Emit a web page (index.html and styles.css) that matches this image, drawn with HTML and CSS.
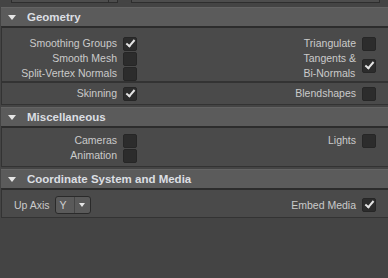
FILE: index.html
```html
<!DOCTYPE html>
<html lang="en">
<head>
    <meta charset="UTF-8">
    <title>FBX Export Options</title>
    <link rel="stylesheet" href="styles.css">
</head>
<body>
    <!-- bottom edge of the fields above, scrolled out of view -->
    <div class="top-fields">
        <div class="field field-short"><span class="field-split"></span></div>
        <div class="field field-long"></div>
    </div>

    <!-- Geometry -->
    <div class="section-header first"><span class="arrow"></span>Geometry</div>
    <div class="group group-geometry">
        <div class="col col-left">
            <div class="opt"><span class="label">Smoothing Groups</span><span class="check on"></span></div>
            <div class="opt"><span class="label">Smooth Mesh</span><span class="check"></span></div>
            <div class="opt"><span class="label">Split-Vertex Normals</span><span class="check"></span></div>
        </div>
        <div class="col col-right">
            <div class="opt"><span class="label">Triangulate</span><span class="check"></span></div>
            <div class="opt opt-tall"><span class="label">Tangents &amp;<br>Bi-Normals</span><span class="check on"></span></div>
        </div>
    </div>
    <div class="group group-single">
        <div class="col col-left">
            <div class="opt"><span class="label">Skinning</span><span class="check on"></span></div>
        </div>
        <div class="col col-right">
            <div class="opt"><span class="label">Blendshapes</span><span class="check"></span></div>
        </div>
    </div>

    <!-- Miscellaneous -->
    <div class="section-header"><span class="arrow"></span>Miscellaneous</div>
    <div class="group group-misc">
        <div class="col col-left">
            <div class="opt"><span class="label">Cameras</span><span class="check"></span></div>
            <div class="opt"><span class="label">Animation</span><span class="check"></span></div>
        </div>
        <div class="col col-right">
            <div class="opt"><span class="label">Lights</span><span class="check"></span></div>
        </div>
    </div>

    <!-- Coordinate System and Media -->
    <div class="section-header"><span class="arrow"></span>Coordinate System and Media</div>
    <div class="group group-coord">
        <div class="axis">
            <span class="label">Up Axis</span>
            <div class="dropdown"><span class="dropdown-value">Y</span><span class="dropdown-btn"><span class="arrow arrow-small"></span></span></div>
        </div>
        <div class="col col-right">
            <div class="opt"><span class="label">Embed Media</span><span class="check on"></span></div>
        </div>
    </div>
</body>
</html>
```

FILE: styles.css
```css
/* page */
body {
    margin: 0;
    background-color: #444444;
    color: #cbcbcb;
    font-family: 'Liberation Sans', Arial, sans-serif;
    font-size: 10.5px;
}

/* fields cut off at the top */
.top-fields {
    display: flex;
    height: 3px;
    padding-left: 11px;
    gap: 13px;
}
.field {
    position: relative;
    height: 2px;
    border: 1px solid #2e2e2e;
    border-top: none;
    background-color: #4d4d4d;
}
.field-short {
    width: 105px;
}
.field-long {
    width: 247px;
}
.field-split {
    position: absolute;
    right: 8px;
    top: 0;
    width: 1px;
    height: 2px;
    background-color: #2e2e2e;
}

/* collapsible section header */
.section-header {
    display: flex;
    align-items: center;
    height: 18px;
    margin-top: 2px;
    margin-left: 1px;
    padding-left: 7px;
    background-color: #5b5b5b;
    border-top: 1px solid #646464;
    color: #dcdfe3;
    font-weight: bold;
    font-size: 11.5px;
}
.section-header.first {
    margin-top: 4px;
}
.arrow {
    width: 0;
    height: 0;
    margin-right: 11px;
    border-left: 4px solid transparent;
    border-right: 4px solid transparent;
    border-top: 5px solid #e6e6e6;
}
.arrow-small {
    margin: 0;
    border-left-width: 3px;
    border-right-width: 3px;
    border-top-width: 4px;
}

/* option groups */
.group {
    display: flex;
    justify-content: space-between;
    margin-left: 1px;
    background-color: #4a4a4a;
    border: 1px solid #333333;
    border-right: none;
}
.section-header + .group {
    border-top: 2px solid #2c2c2c;
}
.group-geometry {
    padding: 8px 0 0;
}
.group-single {
    padding: 3px 0 3px;
}
.group-misc {
    padding: 5px 0 3px;
}
.group-coord {
    align-items: center;
    padding: 6px 0 3px;
}

.col {
    display: flex;
    flex-direction: column;
    align-items: flex-end;
}
.col-left {
    width: 135px;
}
.col-right {
    padding-right: 12px;
}

.opt {
    display: flex;
    align-items: center;
    height: 15px;
    gap: 6px;
}
.opt-tall {
    height: 30px;
}
.label {
    line-height: 15px;
    white-space: nowrap;
}

/* checkbox */
.check {
    position: relative;
    width: 12px;
    height: 12px;
    border: 1px solid #262626;
    border-radius: 2px;
    background-color: #2c2c2c;
}
.check.on::after {
    content: "";
    position: absolute;
    left: 4px;
    top: 0px;
    width: 3px;
    height: 7px;
    border-right: 2px solid #e4e4e4;
    border-bottom: 2px solid #e4e4e4;
    transform: rotate(40deg);
}

/* up axis dropdown */
.axis {
    display: flex;
    align-items: center;
    gap: 5px;
    padding-left: 12px;
}
.dropdown {
    display: flex;
    height: 16px;
    border: 1px solid #2a2a2a;
    border-radius: 3px;
    background-color: #5a5a5a;
}
.dropdown-value {
    width: 19px;
    padding-left: 4px;
    line-height: 16px;
    color: #d0d0d0;
    border-right: 1px solid #444444;
    box-sizing: border-box;
}
.dropdown-btn {
    display: flex;
    align-items: center;
    justify-content: center;
    width: 15px;
}
```
